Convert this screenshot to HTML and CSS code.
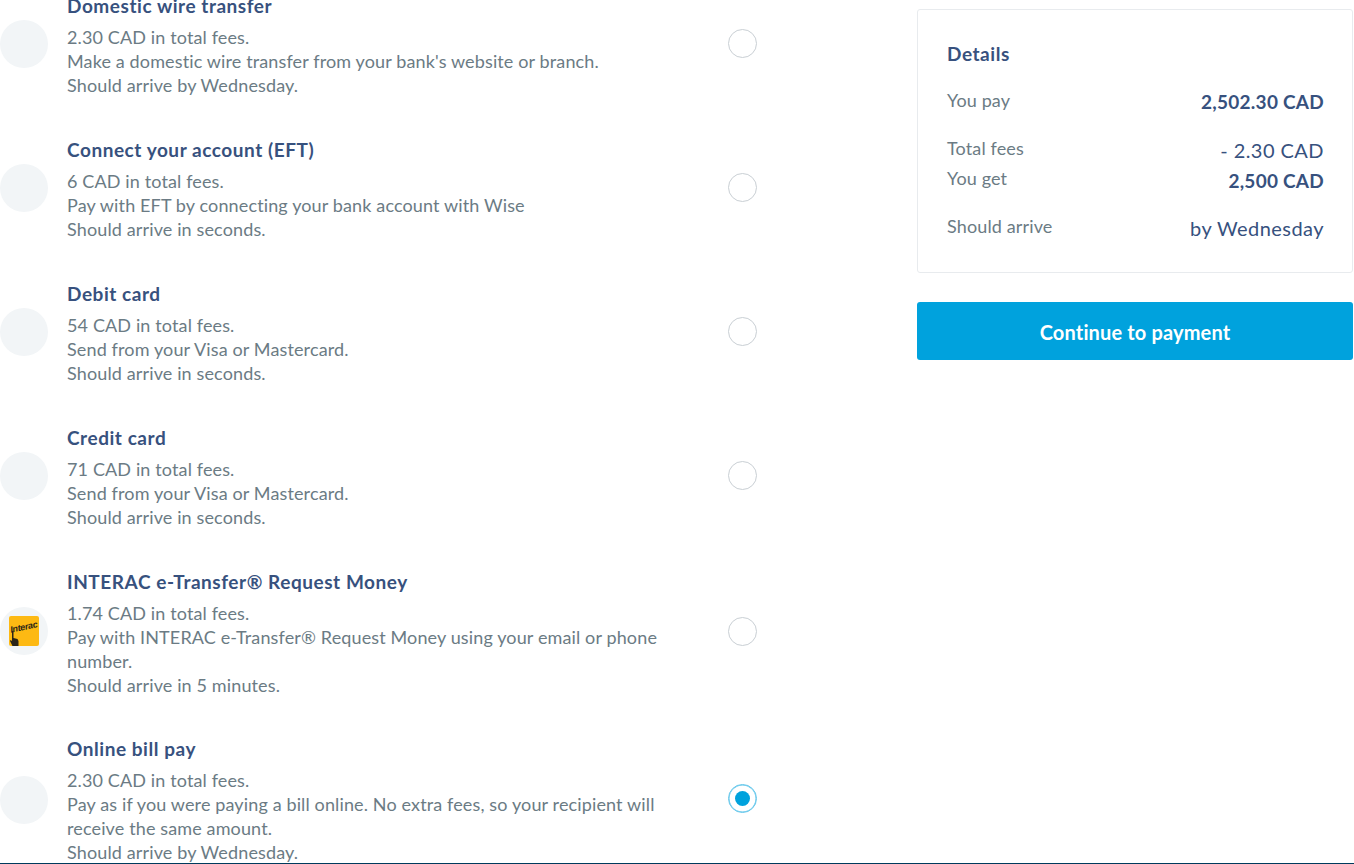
FILE: index.html
```html
<!DOCTYPE html>
<html lang="en">
<head>
    <meta charset="UTF-8">
    <meta name="viewport" content="width=device-width, initial-scale=1.0">
    <title>Choose how to pay</title>
    <link rel="stylesheet" href="styles.css">
</head>
<body>

<div class="page">
    <!-- payment options -->
    <div class="options">
        <div class="option">
            <div class="option-icon"></div>
            <div class="option-text">
                <div class="option-title">Domestic wire transfer</div>
                <div class="option-desc">2.30 CAD in total fees.<br>Make a domestic wire transfer from your bank's website or branch.<br>Should arrive by Wednesday.</div>
            </div>
            <div class="radio"></div>
        </div>
        <div class="option">
            <div class="option-icon"></div>
            <div class="option-text">
                <div class="option-title">Connect your account (EFT)</div>
                <div class="option-desc">6 CAD in total fees.<br>Pay with EFT by connecting your bank account with Wise<br>Should arrive in seconds.</div>
            </div>
            <div class="radio"></div>
        </div>
        <div class="option">
            <div class="option-icon"></div>
            <div class="option-text">
                <div class="option-title">Debit card</div>
                <div class="option-desc">54 CAD in total fees.<br>Send from your Visa or Mastercard.<br>Should arrive in seconds.</div>
            </div>
            <div class="radio"></div>
        </div>
        <div class="option">
            <div class="option-icon"></div>
            <div class="option-text">
                <div class="option-title">Credit card</div>
                <div class="option-desc">71 CAD in total fees.<br>Send from your Visa or Mastercard.<br>Should arrive in seconds.</div>
            </div>
            <div class="radio"></div>
        </div>
        <div class="option option-tall">
            <div class="option-icon">
                <div class="interac">
                    <span class="interac-word">Interac</span>
                    <svg class="interac-hand" width="9" height="15" viewBox="0 0 9 15"><path d="M2 0h1.500v7l4 1 1 2v5H2.500L0 10l.5-1L2 10z" fill="#2a2418"/></svg>
                </div>
            </div>
            <div class="option-text">
                <div class="option-title">INTERAC e-Transfer® Request Money</div>
                <div class="option-desc">1.74 CAD in total fees.<br>Pay with INTERAC e-Transfer® Request Money using your email or phone number.<br>Should arrive in 5 minutes.</div>
            </div>
            <div class="radio"></div>
        </div>
        <div class="option option-last">
            <div class="option-icon"></div>
            <div class="option-text">
                <div class="option-title">Online bill pay</div>
                <div class="option-desc">2.30 CAD in total fees.<br>Pay as if you were paying a bill online. No extra fees, so your recipient will receive the same amount.<br>Should arrive by Wednesday.</div>
            </div>
            <div class="radio radio-on"></div>
        </div>
    </div>

    <!-- summary -->
    <div class="sidebar">
        <div class="details">
            <div class="details-title">Details</div>
            <div class="details-row row-pay">
                <span class="details-label">You pay</span>
                <span class="details-value strong">2,502.30 CAD</span>
            </div>
            <div class="details-row row-fees">
                <span class="details-label">Total fees</span>
                <span class="details-value">- 2.30 CAD</span>
            </div>
            <div class="details-row row-get">
                <span class="details-label">You get</span>
                <span class="details-value strong">2,500 CAD</span>
            </div>
            <div class="details-row row-arrive">
                <span class="details-label">Should arrive</span>
                <span class="details-value">by Wednesday</span>
            </div>
        </div>
        <button class="pay-button">Continue to payment</button>
    </div>
</div>

</body>
</html>
```

FILE: styles.css
```css
body {
    font-family: 'Lato', 'Open Sans', sans-serif;
    margin: 0;
    background: white;
    overflow: hidden;
}

.page {
    display: flex;
    justify-content: space-between;
    height: 863px;
    padding-right: 1px;
    overflow: hidden;
    border-bottom: 1px solid #003a5c;
}

.options {
    width: 757px;
    margin-top: -6px;
}

.option {
    display: flex;
    align-items: center;
    margin-bottom: 41px;
}

.option-tall {
    margin-bottom: 40px;
}

.option-icon {
    width: 48px;
    height: 48px;
    margin-bottom: 3px;
    border-radius: 50%;
    background: #f2f5f7;
    flex-shrink: 0;
    display: flex;
    justify-content: center;
    align-items: center;
}

.option-tall .option-icon {
    margin-bottom: 5px;
}

.option-last .option-icon {
    margin-bottom: 1px;
}

.option-text {
    width: 600px;
    margin-left: 19px;
}

.option-title {
    font-size: 19px;
    font-weight: 700;
    line-height: 24px;
    letter-spacing: 0.55px;
    margin-bottom: 7px;
    color: #37517e;
}

.option-desc {
    font-size: 18px;
    line-height: 24px;
    letter-spacing: 0.13px;
    color: #6b7b84;
}

.radio {
    width: 27px;
    height: 27px;
    margin-left: auto;
    margin-bottom: 4px;
    border: 1px solid #c9cfd4;
    border-radius: 50%;
    flex-shrink: 0;
    display: flex;
    justify-content: center;
    align-items: center;
}

.radio-on {
    border: 1px solid #5cc4ea;
    box-shadow: inset 0 0 0 0.5px #5cc4ea;
}

.radio-on::after {
    content: "";
    width: 15px;
    height: 15px;
    border-radius: 50%;
    background: #00a2dd;
}

.interac {
    position: relative;
    width: 30px;
    height: 30px;
    border-radius: 2px;
    background: #fdb913;
    overflow: hidden;
}

.interac-word {
    position: absolute;
    top: 6px;
    left: 1px;
    font-family: 'Liberation Sans', sans-serif;
    font-size: 9px;
    font-weight: 700;
    font-style: italic;
    letter-spacing: -0.3px;
    color: #2a2418;
    transform: rotate(-12deg);
}

.interac-hand {
    position: absolute;
    left: 1px;
    bottom: 0;
}

.sidebar {
    width: 436px;
    padding-top: 9px;
}

.details {
    height: 262px;
    padding: 0 28px 0 29px;
    border: 1px solid #e8ebee;
    border-radius: 3px;
    color: #37517e;
}

.details-title {
    font-size: 19px;
    font-weight: 700;
    line-height: 24px;
    letter-spacing: 0.55px;
    padding-top: 32px;
}

.details-row {
    display: flex;
    justify-content: space-between;
    line-height: 24px;
}

.details-label {
    font-size: 18px;
    letter-spacing: 0.13px;
    color: #6b7b84;
    position: relative;
    top: -3px;
}

.row-pay .details-label {
    top: -2px;
}

.details-value {
    font-size: 20px;
    letter-spacing: 0.45px;
    position: relative;
    top: -1px;
}

.strong {
    font-size: 19px;
    font-weight: 700;
    letter-spacing: 0.25px;
    top: 0;
}

.row-pay {
    margin-top: 24px;
}

.row-fees {
    margin-top: 25px;
}

.row-get {
    margin-top: 6px;
}

.row-arrive {
    margin-top: 24px;
}

.pay-button {
    display: block;
    width: 100%;
    height: 58px;
    margin-top: 29px;
    padding-top: 2px;
    border: none;
    border-radius: 3px;
    background: #00a2dd;
    color: white;
    font-family: inherit;
    font-size: 20px;
    font-weight: 700;
    letter-spacing: 0.15px;
}
```
